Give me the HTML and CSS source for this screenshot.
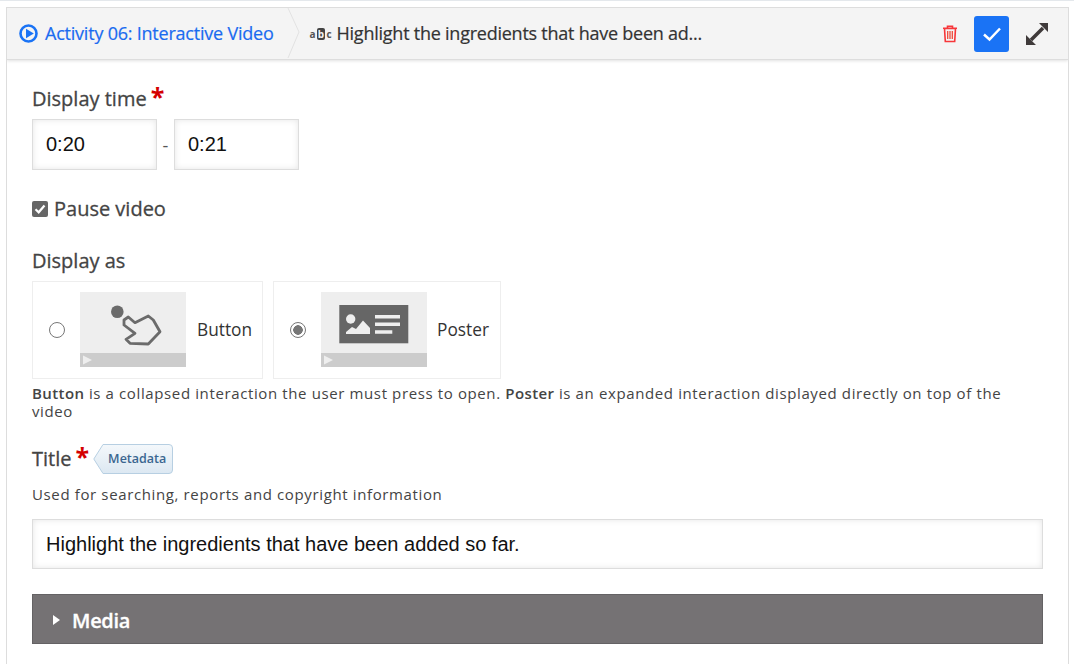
FILE: index.html
```html
<!DOCTYPE html>
<html lang="en">
<head>
<meta charset="utf-8">
<title>Activity 06: Interactive Video</title>
<link rel="stylesheet" href="styles.css">
</head>
<body>
<div class="frame">
  <header class="bar">
    <a class="crumb">
      <svg class="play-ico" width="20" height="20" viewBox="0 0 20 20"><circle cx="9.500" cy="9.500" r="8" fill="none" stroke="#1a73f5" stroke-width="2.600"/><path d="M7 4.800 14.800 9.500 7 14.200z" fill="#1a73f5"/></svg>
      <span class="bar-text">Activity 06: Interactive Video</span>
    </a>
    <svg class="chev" width="16" height="51" viewBox="0 0 16 51"><path d="M1 0 12 24 1 50" fill="none" stroke="#e2e2e2"/></svg>
    <div class="current">
      <span class="abc"><i>a</i><b>b</b><i>c</i></span>
      <span class="bar-text">Highlight the ingredients that have been ad...</span>
    </div>
    <div class="tools">
      <svg class="trash" width="16" height="18" viewBox="0 0 16 18"><path d="M5.500 3V1.200h5V3M1 3.200h14M2.500 3.500l.8 13h9.400l.8-13z" fill="none" stroke="#f7373a" stroke-width="1.600"/><path d="M5.700 6v8M8 6v8M10.300 6v8" stroke="#ef4a3a" stroke-width="1.300"/></svg>
      <button class="done" type="button"><svg width="20" height="16" viewBox="0 0 20 16"><path d="M2 8.500 7.500 13.500 18 2.500" fill="none" stroke="#fff" stroke-width="2.500"/></svg></button>
      <svg class="expand" width="22" height="22" viewBox="0 0 22 22"><path d="M13 0H22V9zM0 12 10 22H0z" fill="#3f3a3a"/><path d="M17 5 5 17" stroke="#3f3a3a" stroke-width="3.600"/></svg>
    </div>
  </header>
  <main class="form">
    <section class="time-field">
      <div class="label">Display time<span class="req">*</span></div>
      <div class="time-row">
        <input class="input time" value="0:20" aria-label="Start">
        <span class="dash">-</span>
        <input class="input time" value="0:21" aria-label="End">
      </div>
    </section>
    <label class="pause"><span class="check"><svg width="14" height="14" viewBox="0 0 14 14"><path d="M2.500 7.200 5.700 10.300 11.500 3.500" fill="none" stroke="#fff" stroke-width="2.200"/></svg></span>Pause video</label>
    <section class="display-field">
      <div class="label">Display as</div>
      <div class="options">
        <div class="option opt-button">
          <span class="radio"></span>
          <svg class="thumb" width="106" height="75" viewBox="0 0 106 75">
            <rect width="106" height="75" fill="#eee"/><rect y="61" width="106" height="14" fill="#ccc"/><path d="M3 63.500 12 68 3 72.500z" fill="#eee"/>
            <circle cx="37.300" cy="19.700" r="6.300" fill="#6b6b6b"/>
            <path d="M44 28 48.300 25 55 30.700 68.300 24 73.300 28 80 39.700 68.300 52 50 51.300 46 47.300 55 41.300 44 33z" fill="none" stroke="#6b6b6b" stroke-width="2.800" stroke-linejoin="round"/>
          </svg>
          <span class="opt-text">Button</span>
        </div>
        <div class="option opt-poster">
          <span class="radio on"></span>
          <svg class="thumb" width="106" height="75" viewBox="0 0 106 75">
            <rect width="106" height="75" fill="#eee"/><rect y="61" width="106" height="14" fill="#ccc"/><path d="M3 63.500 12 68 3 72.500z" fill="#eee"/>
            <rect x="18.300" y="13" width="69" height="38.300" fill="#666"/>
            <circle cx="29.700" cy="27" r="4.700" fill="#eee"/>
            <path d="M25 42V40L31 35 35 37 42 28.500 49 36V42z" fill="#eee"/>
            <path d="M54 24.700H79M54 32.300H79M54 40H71.300" stroke="#eee" stroke-width="3.500"/>
          </svg>
          <span class="opt-text">Poster</span>
        </div>
      </div>
      <p class="desc"><b>Button</b> is a collapsed interaction the user must press to open. <b>Poster</b> is an expanded interaction displayed directly on top of the video</p>
    </section>
    <section class="title-field">
      <div class="title-head">
        <div class="label">Title<span class="req">*</span></div>
        <span class="meta"><svg class="meta-shape" width="80" height="30" viewBox="0 0 80 30"><defs><linearGradient id="metaFill" x1="0" y1="0" x2="0" y2="1"><stop offset="0" stop-color="#f4f8fb"/><stop offset="1" stop-color="#dce8f2"/></linearGradient></defs><path d="M.8 15 10 .5H76a3.500 3.500 0 0 1 3.500 3.500V26a3.500 3.500 0 0 1-3.500 3.500H10z" fill="url(#metaFill)" stroke="#b7cfe2"/></svg><span class="meta-text">Metadata</span></span>
      </div>
      <p class="desc hint">Used for searching, reports and copyright information</p>
      <input class="input wide" value="Highlight the ingredients that have been added so far." aria-label="Title">
    </section>
    <div class="media"><span class="caret"></span>Media</div>
  </main>
</div>
</body>
</html>
```
FILE: styles.css
```css
* { box-sizing: border-box; }
html, body { height: 100%; }
body {
  margin: 0;
  overflow: hidden;
  background: #fff;
  border-top: 1px solid #e4e8ec;
  font-family: "Open Sans", sans-serif;
  color: #444;
}
.frame {
  margin: 6px 5px 0 6px;
  border: 1px solid #ddd;
  border-bottom: 0;
  height: 657px;
  overflow: hidden;
}
.bar {
  display: flex;
  align-items: center;
  height: 52px;
  background: #f4f4f4;
  border-bottom: 1px solid #ddd;
  box-shadow: 0 1px 3px rgba(0,0,0,.12);
  padding-left: 12px;
}
.bar-text { margin-bottom: 2px; -webkit-text-stroke: .2px; }
.crumb {
  display: flex;
  align-items: center;
  gap: 6px;
  color: #1a6bf0;
  font-size: 18px;
  letter-spacing: -0.22px;
  white-space: nowrap;
}
.chev { margin-left: 13px; flex: none; }
.current {
  display: flex;
  align-items: center;
  margin-left: 7px;
  color: #333;
  font-size: 18px;
  letter-spacing: -0.24px;
  white-space: nowrap;
}
.abc {
  display: flex;
  align-items: center;
  width: 22px;
  margin-right: 5px;
  font-size: 10px;
  letter-spacing: 0;
  color: #555;
}
.abc i { font-style: normal; font-weight: 700; line-height: 10px; }
.abc b {
  width: 11px;
  height: 12px;
  margin: 0 1px;
  background: #444;
  border-radius: 2px;
  color: #f4f4f4;
  text-align: center;
  line-height: 12px;
  font-size: 10px;
}
.tools {
  margin-left: auto;
  display: flex;
  align-items: center;
  padding-right: 20px;
}
.trash { margin-right: 16px; }
.done {
  display: flex;
  align-items: center;
  justify-content: center;
  width: 35px;
  height: 36px;
  padding: 0;
  border: 0;
  border-radius: 3px;
  background: #1a73f5;
  margin-right: 17px;
}
.form { padding: 25px 25px 0 25px; }
.label {
  font-size: 20px;
  line-height: 27px;
  color: #444;
  font-weight: 400;
  -webkit-text-stroke: .3px;
}
.req {
  color: #d40000;
  font-size: 25px;
  font-weight: 700;
  line-height: 20px;
  margin-left: 4px;
  -webkit-text-stroke: 0;
}
.time-row {
  display: flex;
  align-items: center;
  margin-top: 7px;
}
.input {
  display: block;
  border: 1px solid #ddd;
  background: #fff;
  box-shadow: inset 0 0 6px rgba(0,0,0,.1);
  font-family: "Liberation Sans", Arial, sans-serif;
  font-size: 20px;
  color: #111;
  padding: 0 13px;
}
.time { width: 125px; height: 51px; }
.dash { width: 17px; text-align: center; font-size: 18px; color: #555; }
.pause {
  display: flex;
  align-items: center;
  margin-top: 25px;
  font-size: 20px;
  line-height: 27px;
  color: #444;
  -webkit-text-stroke: .3px;
}
.check {
  display: flex;
  align-items: center;
  justify-content: center;
  width: 16px;
  height: 16px;
  margin-right: 6px;
  background: #666;
  border-radius: 2px;
}
.display-field { margin-top: 25px; }
.options {
  display: flex;
  gap: 10px;
  margin-top: 7px;
}
.option {
  display: flex;
  align-items: center;
  height: 98px;
  border: 1px solid #eee;
  padding-left: 16px;
}
.opt-button { width: 231px; }
.opt-poster { width: 228px; }
.radio {
  width: 16px;
  height: 16px;
  border: 1px solid #777;
  border-radius: 50%;
  background: #fff;
  margin-right: 15px;
  flex: none;
}
.radio.on { background: radial-gradient(circle, #777 0 4.500px, #fff 5px); }
.thumb { flex: none; margin-bottom: 2px; }
.opt-text {
  margin: 0 0 2px 11px;
  font-size: 17.300px;
  color: #333;
}
.opt-poster .opt-text { margin-left: 10px; }
.desc {
  margin: 5px 0 0;
  font-size: 15px;
  line-height: 18px;
  letter-spacing: 0.62px;
  color: #444;
  width: 980px;
}
.desc b { font-weight: 600; letter-spacing: .4px; }
.title-field { margin-top: 22px; }
.title-head { display: flex; align-items: center; }
.meta {
  position: relative;
  display: block;
  margin: 2px 0 0 4px;
  width: 80px;
  height: 30px;
  flex: none;
}
.meta-shape { position: absolute; left: 0; top: 0; }
.meta-text {
  position: relative;
  display: block;
  padding-left: 15px;
  line-height: 30px;
  font-size: 12.500px;
  font-weight: 600;
  color: #3b6690;
}
.desc.hint { margin-top: 11px; letter-spacing: .63px; }
.wide {
  width: 100%;
  height: 50px;
  margin-top: 16px;
}
.media {
  display: flex;
  align-items: center;
  height: 50px;
  margin-top: 25px;
  padding: 2px 0 0 20px;
  background: #757274;
  border: 1px solid #646264;
  color: #fff;
  font-size: 20px;
  font-weight: 600;
  letter-spacing: -0.3px;
  -webkit-text-stroke: .3px;
}
.caret {
  width: 0;
  height: 0;
  margin-right: 12px;
  border-left: 7px solid #fff;
  border-top: 5px solid transparent;
  border-bottom: 5px solid transparent;
}
```
